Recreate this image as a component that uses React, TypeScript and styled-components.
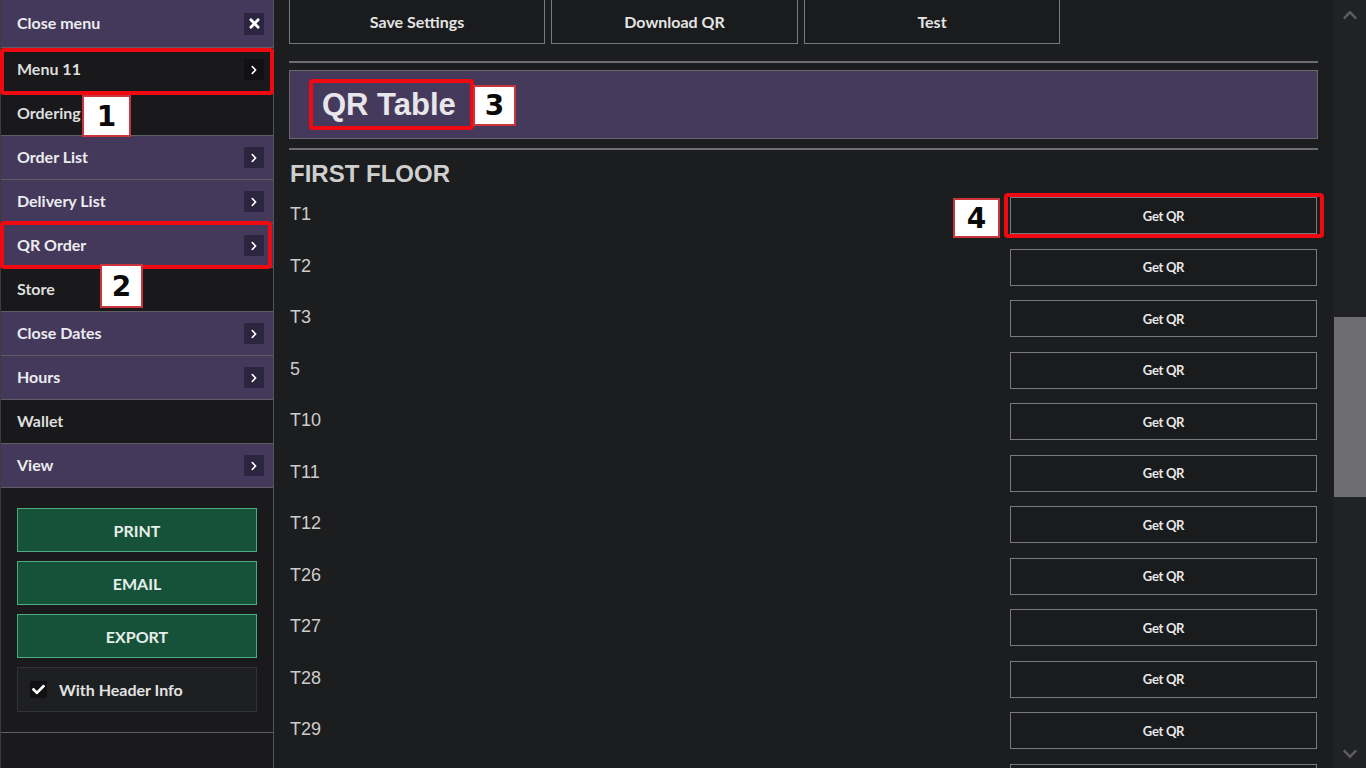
import styled, { createGlobalStyle } from "styled-components";
import { FaTimes, FaChevronRight, FaCheck, FaChevronUp, FaChevronDown } from "react-icons/fa";

const GlobalStyle = createGlobalStyle`
  html, body {
    margin: 0;
    padding: 0;
    background: #1c1d1f;
    overflow: hidden;
  }
  * {
    box-sizing: border-box;
  }
`;

type MenuEntry = { label: string; tone: "purple" | "dark"; arrow?: boolean; close?: boolean };

const menu: MenuEntry[] = [
  { label: "Close menu", tone: "purple", close: true },
  { label: "Menu 11", tone: "dark", arrow: true },
  { label: "Ordering", tone: "dark" },
  { label: "Order List", tone: "purple", arrow: true },
  { label: "Delivery List", tone: "purple", arrow: true },
  { label: "QR Order", tone: "purple", arrow: true },
  { label: "Store", tone: "dark" },
  { label: "Close Dates", tone: "purple", arrow: true },
  { label: "Hours", tone: "purple", arrow: true },
  { label: "Wallet", tone: "dark" },
  { label: "View", tone: "purple", arrow: true },
];

const tables = ["T1", "T2", "T3", "5", "T10", "T11", "T12", "T26", "T27", "T28", "T29", "T30"];

// numbered callouts drawn over the page
const callouts = [
  { n: "1", box: { x: 0, y: 48, w: 274, h: 47 }, tag: { x: 82, y: 95, w: 49, h: 42 } },
  { n: "2", box: { x: 0, y: 221, w: 272, h: 48 }, tag: { x: 100, y: 264, w: 43, h: 44 } },
  { n: "3", box: { x: 309, y: 79, w: 165, h: 51 }, tag: { x: 473, y: 85, w: 43, h: 41 } },
  { n: "4", box: { x: 1004, y: 193, w: 320, h: 45 }, tag: { x: 953, y: 198, w: 47, h: 40 } },
];

export default function App() {
  return (
    <>
      <GlobalStyle />
      <Page>
        <Sidebar>
          {menu.map((m, i) => (
            <MenuItem key={m.label} $tone={m.tone} $first={i === 0}>
              <span>{m.label}</span>
              {m.close && (
                <IconBox $tone="purple" $big>
                  <FaTimes size={15} />
                </IconBox>
              )}
              {m.arrow && (
                <IconBox $tone={m.tone}>
                  <FaChevronRight size={10} />
                </IconBox>
              )}
            </MenuItem>
          ))}
          <ActionPanel>
            <GreenBtn>PRINT</GreenBtn>
            <GreenBtn>EMAIL</GreenBtn>
            <GreenBtn>EXPORT</GreenBtn>
            <CheckRow>
              <CheckMark>
                <FaCheck size={13} />
              </CheckMark>
              With Header Info
            </CheckRow>
          </ActionPanel>
        </Sidebar>

        <Main>
          <TopBar>
            <TopBtn>Save Settings</TopBtn>
            <TopBtn $w={247}>Download QR</TopBtn>
            <TopBtn>Test</TopBtn>
          </TopBar>
          <Rule $top={17} />
          <TitleBox>
            <Title>QR Table</Title>
          </TitleBox>
          <Rule $top={9} />
          <FloorName>FIRST FLOOR</FloorName>
          <TableList>
            {tables.map((t) => (
              <TableRow key={t}>
                <TableName>{t}</TableName>
                <QrBtn>Get QR</QrBtn>
              </TableRow>
            ))}
          </TableList>
        </Main>

        <ScrollTrack>
          <ScrollArrow>
            <FaChevronUp size={16} />
          </ScrollArrow>
          <Thumb />
          <ScrollArrow $bottom>
            <FaChevronDown size={16} />
          </ScrollArrow>
        </ScrollTrack>

        {callouts.map((c) => (
          <div key={c.n}>
            <CalloutBox style={{ left: c.box.x, top: c.box.y, width: c.box.w, height: c.box.h }} />
            <CalloutTag style={{ left: c.tag.x, top: c.tag.y, width: c.tag.w, height: c.tag.h }}>
              {c.n}
            </CalloutTag>
          </div>
        ))}
      </Page>
    </>
  );
}

const Page = styled.div`
  position: relative;
  display: flex;
  width: 1366px;
  height: 768px;
  overflow: hidden;
  background: #1c1d1f;
`;

const Sidebar = styled.aside`
  width: 274px;
  flex-shrink: 0;
  display: flex;
  flex-direction: column;
  background: #1a1a1c;
  border-left: 1px solid #3c3c3e;
  border-right: 1px solid #545456;
  font-family: Lato, "Open Sans", sans-serif;

  & > * {
    flex-shrink: 0;
  }
`;

const MenuItem = styled.div<{ $tone: "purple" | "dark"; $first?: boolean }>`
  height: ${(p) => (p.$first ? 48 : 44)}px;
  display: flex;
  align-items: center;
  justify-content: space-between;
  padding: 0 9px 0 16px;
  background: ${(p) => (p.$tone === "purple" ? "#44395a" : "#19191b")};
  border-bottom: 1px solid #5e5e62;
  color: ${(p) => (p.$tone === "purple" ? "#ececf0" : "#dedede")};
  font-size: 16px;
  font-weight: 700;

  & > span {
    margin-top: -2px;
  }
`;

const IconBox = styled.div<{ $tone: "purple" | "dark"; $big?: boolean }>`
  width: 20px;
  height: ${(p) => (p.$big ? 22 : 21)}px;
  display: flex;
  align-items: center;
  justify-content: center;
  background: ${(p) => (p.$tone === "purple" ? "#2c2540" : "#111113")};
  color: #ffffff;
`;

const ActionPanel = styled.div`
  display: flex;
  flex-direction: column;
  gap: 9px;
  padding: 20px 16px 20px 16px;
  border-bottom: 1px solid #5e5e62;
`;

const GreenBtn = styled.div`
  height: 44px;
  display: flex;
  align-items: center;
  justify-content: center;
  background: #16513a;
  border: 1px solid #4dab82;
  color: #e6efe9;
  font-size: 16px;
  font-weight: 700;
`;

const CheckRow = styled.div`
  height: 45px;
  display: flex;
  align-items: center;
  gap: 12px;
  padding-left: 12px;
  background: #1e1f21;
  border: 1px solid #333335;
  color: #e2e2e2;
  font-size: 16px;
  font-weight: 700;
`;

const CheckMark = styled.div`
  width: 17px;
  height: 17px;
  display: flex;
  align-items: center;
  justify-content: center;
  background: #111113;
  color: #ffffff;
`;

const Main = styled.main`
  flex: 1;
  display: flex;
  flex-direction: column;
  padding: 0 15px 0 15px;
  min-width: 0;
  overflow: hidden;

  & > * {
    flex-shrink: 0;
  }
`;

const TopBar = styled.div`
  display: flex;
  gap: 6px;
`;

const TopBtn = styled.div<{ $w?: number }>`
  width: ${(p) => p.$w ?? 256}px;
  height: 45px;
  margin-top: -1px;
  display: flex;
  align-items: center;
  justify-content: center;
  border: 1px solid #7a7a7c;
  background: #1a1b1d;
  color: #e4e4e4;
  font-family: Lato, "Open Sans", sans-serif;
  font-size: 16px;
  font-weight: 700;
`;

const Rule = styled.hr<{ $top: number }>`
  margin: ${(p) => p.$top}px 0 0 0;
  border: none;
  border-top: 2px solid #6e6e70;
  height: 0;
`;

const TitleBox = styled.div`
  margin-top: 7px;
  height: 69px;
  display: flex;
  align-items: center;
  padding-left: 32px;
  background: #453a5b;
  border: 1px solid #6a6a6c;
`;

const Title = styled.h1`
  margin: 0;
  color: #e8e6ea;
  font-family: "Liberation Sans", Arial, sans-serif;
  font-size: 31px;
  font-weight: 700;
`;

const FloorName = styled.h2`
  margin: 10px 0 0 1px;
  height: 28px;
  color: #cfcfcf;
  font-family: "Liberation Sans", Arial, sans-serif;
  font-size: 24px;
  font-weight: 700;
  line-height: 28px;
`;

const TableList = styled.div`
  display: flex;
  flex-direction: column;
  gap: 14.5px;
  margin-top: 9px;
`;

const TableRow = styled.div`
  display: flex;
  align-items: center;
  justify-content: space-between;
  height: 37px;
  padding-right: 1px;
`;

const TableName = styled.span`
  padding-left: 1px;
  margin-top: -2px;
  color: #cccccc;
  font-family: "Liberation Sans", Arial, sans-serif;
  font-size: 18px;
`;

const QrBtn = styled.div`
  width: 307px;
  height: 37px;
  display: flex;
  align-items: center;
  justify-content: center;
  border: 1px solid #7a7a7c;
  background: #1a1b1d;
  color: #e8e8e8;
  font-family: Lato, "Open Sans", sans-serif;
  font-size: 13px;
  font-weight: 700;
  letter-spacing: -0.3px;
`;

const ScrollTrack = styled.div`
  width: 33px;
  flex-shrink: 0;
  display: flex;
  flex-direction: column;
  align-items: flex-end;
  background: #202224;
`;

const ScrollArrow = styled.div<{ $bottom?: boolean }>`
  width: 33px;
  height: 29px;
  display: flex;
  align-items: center;
  justify-content: center;
  color: #5d5d5f;
  margin-top: ${(p) => (p.$bottom ? "auto" : "0")};
`;

const Thumb = styled.div`
  width: 32px;
  height: 180px;
  margin-top: 288px;
  background: #6e6e70;
`;

const CalloutBox = styled.div`
  position: absolute;
  border: 4px solid #ee0a10;
  border-radius: 4px;
  pointer-events: none;
`;

const CalloutTag = styled.div`
  position: absolute;
  display: flex;
  align-items: center;
  justify-content: center;
  background: #ffffff;
  border: 2px solid #c9353a;
  color: #0a0a0a;
  font-family: "DejaVu Sans", Verdana, sans-serif;
  font-size: 28px;
  font-weight: 700;
`;
